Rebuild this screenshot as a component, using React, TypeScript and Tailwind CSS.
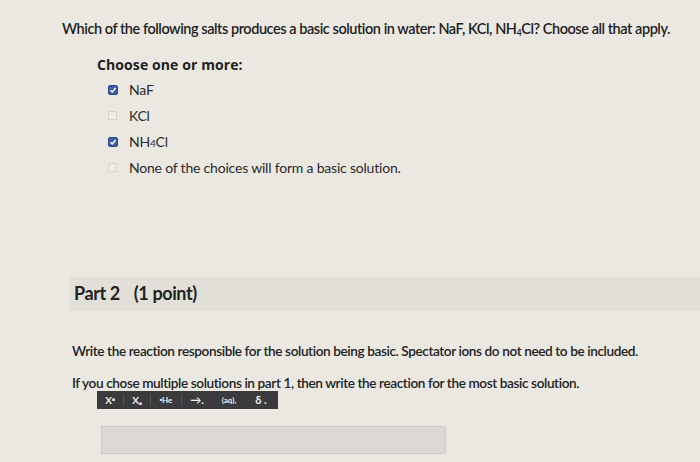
import React from "react";

function Checked() {
  return (
    <span className="flex h-[10px] w-[10px] items-center justify-center rounded-[2px] bg-[#3d5ea6] border border-[#2d4a8a]">
      <svg width="8" height="8" viewBox="0 0 8 8">
        <path d="M1.5 4.2 L3.3 6 L6.6 2" stroke="#fff" strokeWidth="1.4" fill="none" />
      </svg>
    </span>
  );
}

function Unchecked() {
  return <span className="block h-[9px] w-[9px] rounded-[1px] border border-[#d6d3cc] bg-[#efece6]" />;
}

function Option({ checked, children }: { checked: boolean; children: React.ReactNode }) {
  return (
    <div className="flex h-[26px] items-center">
      <div className="flex w-[32px] justify-start pl-[11px]">{checked ? <Checked /> : <Unchecked />}</div>
      <div className="text-[14px] text-[#2a2a2a] tracking-[-0.2px]">{children}</div>
    </div>
  );
}

export default function App() {
  return (
    <div
      className="h-[462px] w-[700px] overflow-hidden bg-[#ebe8e2] text-[#222]"
      style={{ fontFamily: "Lato, 'Open Sans', sans-serif" }}
    >
      <div className="pl-[62px] pt-[18px] text-[14.5px] font-semibold tracking-[-0.45px] text-[#1e1e1e]">
        Which of the following salts produces a basic solution in water: NaF, KCl, NH
        <sub className="text-[9px]">4</sub>Cl? Choose all that apply.
      </div>

      <div className="pl-[97px] pt-[14px]">
        <div
          className="text-[14px] font-bold text-[#222] tracking-[0.1px]"
          style={{ fontFamily: "'Open Sans', sans-serif" }}
        >
          Choose one or more:
        </div>
        <div className="mt-[2px]">
          <Option checked>NaF</Option>
          <Option checked={false}>KCl</Option>
          <Option checked>
            NH<span className="text-[10px]">4</span>Cl
          </Option>
          <Option checked={false}>None of the choices will form a basic solution.</Option>
        </div>
      </div>

      <div className="ml-[70px] mt-[96px] flex h-[34px] items-center bg-[#e2dfd9] pl-[4px]">
        <span className="text-[18px] font-bold text-[#222] tracking-[-0.4px]">Part 2</span>
        <span className="ml-[14px] text-[18px] font-bold text-[#222] tracking-[-0.4px]">(1 point)</span>
      </div>

      <div className="pl-[72px] pt-[30px] text-[13.6px] font-semibold tracking-[-0.4px] text-[#222]">
        Write the reaction responsible for the solution being basic. Spectator ions do not need to be included.
      </div>
      <div className="pl-[72px] pt-[14px] leading-[17px] text-[13.6px] font-semibold tracking-[-0.4px] text-[#222]">
        If you chose multiple solutions in part 1, then write the reaction for the most basic solution.
      </div>

      <div className="ml-[97px] mt-[-1px] flex h-[18px] w-[181px] items-center bg-[#3b3b3d] text-[10px] font-bold text-[#eee]">
        <div className="flex w-[26px] justify-center">
          <span>
            X<sup className="text-[5px]">■</sup>
          </span>
        </div>
        <div className="h-[12px] w-px bg-[#555]" />
        <div className="flex w-[26px] justify-center">
          <span>
            X<sub className="text-[5px]">■</sub>
          </span>
        </div>
        <div className="h-[12px] w-px bg-[#555]" />
        <div className="flex w-[30px] justify-center">
          <span className="text-[8px]">
            <sup className="text-[4px]">■</sup>He
          </span>
        </div>
        <div className="h-[12px] w-px bg-[#555]" />
        <div className="flex w-[30px] justify-center text-[11px]">→.</div>
        <div className="flex w-[34px] justify-center text-[8px]">(aq),</div>
        <div className="flex w-[30px] justify-center text-[11px]">δ .</div>
      </div>

      <div className="ml-[101px] mt-[17px] h-[28px] w-[345px] border border-[#cfccc6] bg-[#dcd9d4]" />
    </div>
  );
}
